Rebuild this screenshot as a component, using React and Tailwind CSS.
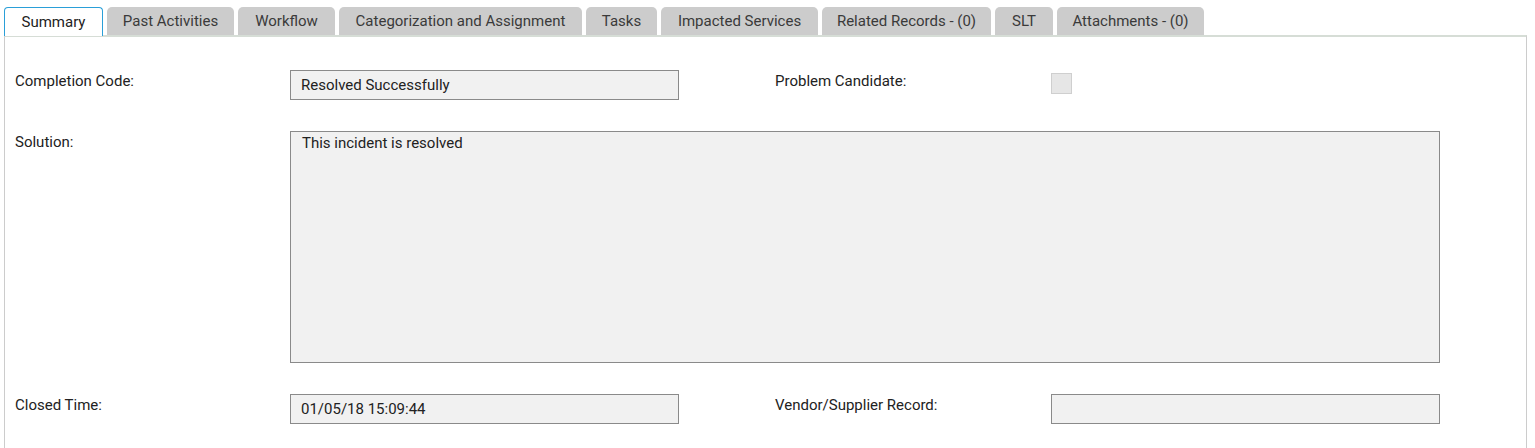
import React from "react";

const tabs = [
  "Summary",
  "Past Activities",
  "Workflow",
  "Categorization and Assignment",
  "Tasks",
  "Impacted Services",
  "Related Records - (0)",
  "SLT",
  "Attachments - (0)",
];

const tabWidths = [99, 127, 97, 243, 71, 157, 169, 58, 147];

function Field({ value }) {
  return (
    <div className="h-[30px] w-[389px] border border-[#8a8a8a] bg-[#f1f1f1] px-[10px] flex items-center text-[15px] text-[#222]">
      {value}
    </div>
  );
}

export default function App() {
  return (
    <div
      className="w-[1535px] h-[448px] bg-white overflow-hidden"
      style={{ fontFamily: "Roboto, 'Liberation Sans', sans-serif" }}
    >
      <div className="pt-[7px] pl-[4px] pr-[8px]">
        <div className="flex gap-[4px] h-[28px] relative z-10">
          {tabs.map((t, i) =>
            i === 0 ? (
              <div
                key={t}
                style={{ width: tabWidths[i] }}
                className="h-[29px] bg-white border border-b-0 border-[#2a9fd8] rounded-t-[4px] flex items-center justify-center text-[15px] text-[#222]"
              >
                {t}
              </div>
            ) : (
              <div
                key={t}
                style={{ width: tabWidths[i] }}
                className="h-[28px] bg-[#cccccc] rounded-t-[5px] flex items-center justify-center text-[15px] text-[#3a3a3a]"
              >
                {t}
              </div>
            )
          )}
        </div>
        <div className="border-t-2 border-t-[#d6ddd6] border-l border-r border-l-[#cccccc] border-r-[#cccccc] h-[420px] pl-[10px] pt-[33px]">
          <div className="flex items-start">
            <div className="w-[275px] pt-[1px] leading-[20px] text-[15px] text-[#222]">Completion Code:</div>
            <Field value="Resolved Successfully" />
            <div className="w-[96px]" />
            <div className="w-[276px] pt-[1px] leading-[20px] text-[15px] text-[#222]">Problem Candidate:</div>
            <div className="mt-[3px] w-[21px] h-[21px] border border-[#cfcfcf] bg-[#e6e6e6]" />
          </div>
          <div className="flex items-start mt-[31px]">
            <div className="w-[275px] pt-[1px] leading-[20px] text-[15px] text-[#222]">Solution:</div>
            <div className="h-[232px] w-[1150px] border border-[#8a8a8a] bg-[#f1f1f1] px-[11px] pt-[1px] leading-[20px] text-[15px] text-[#222]">
              This incident is resolved
            </div>
          </div>
          <div className="flex items-start mt-[31px]">
            <div className="w-[275px] pt-[1px] leading-[20px] text-[15px] text-[#222]">Closed Time:</div>
            <Field value="01/05/18 15:09:44" />
            <div className="w-[96px]" />
            <div className="w-[276px] pt-[1px] leading-[20px] text-[15px] text-[#222]">Vendor/Supplier Record:</div>
            <Field value="" />
          </div>
        </div>
      </div>
    </div>
  );
}
